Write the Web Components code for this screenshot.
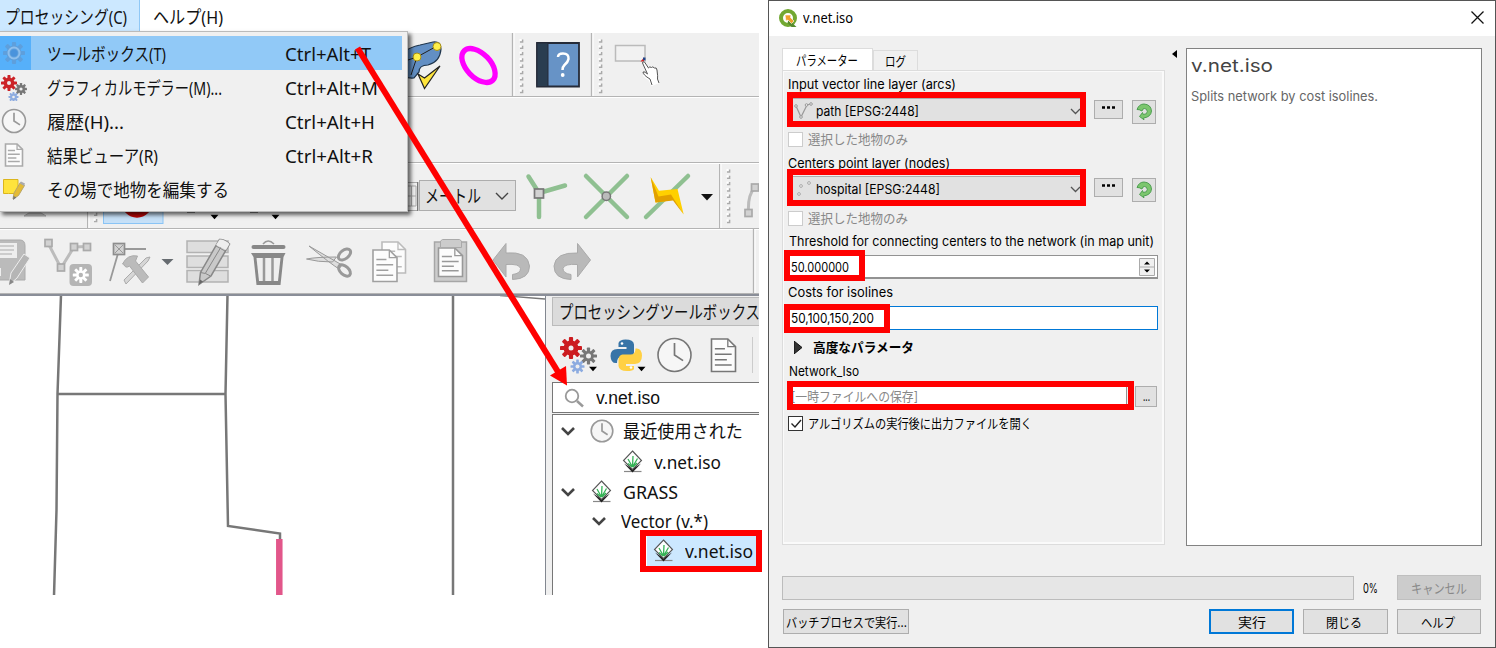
<!DOCTYPE html>
<html lang="ja"><head><meta charset="utf-8"><title>v.net.iso</title>
<style>html,body{margin:0;width:1496px;height:648px;overflow:hidden;background:#fff}</style></head>
<body><app-page></app-page>
<script>
const define=(n,html,after)=>customElements.define(n,class extends HTMLElement{
 connectedCallback(){ if(this.shadowRoot)return; const r=this.attachShadow({mode:'open'});
  const t=document.createElement('template'); t.innerHTML=typeof html==='function'?html(this):html; r.append(t.content.cloneNode(true)); if(after)after(this,r);}});

/* one line of text fitted to the width given in "w" */
define('fit-text','<style>:host{display:inline-block;white-space:nowrap;flex:none;line-height:20px;height:20px;text-align:left}span{display:inline-block;transform-origin:0 50%}</style><span><slot></slot></span>',(h,r)=>{
 const s=r.querySelector('span'),w=+h.getAttribute('w'); const m=s.getBoundingClientRect().width; h.style.width=w+'px'; if(m)s.style.transform=`scaleX(${w/m})`;});

const gear=(cx,cy,ro,ri,n,hole,fill)=>{let teeth='';for(let i=0;i<n;i++)teeth+=`<rect x="${cx-ro*.19}" y="${cy-ro}" width="${ro*.38}" height="${ro}" rx="${ro*.08}" transform="rotate(${i*360/n} ${cx} ${cy})"/>`;
 return `<g fill="${fill}">${teeth}<circle cx="${cx}" cy="${cy}" r="${ri}"/></g><circle cx="${cx}" cy="${cy}" r="${hole}" fill="#eee"/>`};
const grip=(x,y,n)=>{let s='';for(let i=0;i<n;i++)s+=`<path d="M${x} ${y+i*6.3+3}h2.6v-2.6" stroke="#aaa" stroke-width="1.5" fill="none"/><rect x="${x-.5}" y="${y+i*6.3}" width="2" height="2" fill="#fff"/>`;return s};
const sep=(x,y,h)=>`<path d="M${x+.5} ${y}v${h}" stroke="#b4b4b4" stroke-width="1.3"/><path d="M${x+2} ${y}v${h}" stroke="#fff"/>`;
const node=(x,y,s=7,c='#aaa')=>`<rect x="${x-s/2}" y="${y-s/2}" width="${s}" height="${s}" fill="#d2d2d2" stroke="${c}" stroke-width="1.7"/>`;
const clock=(x,y,r,c='#777',f='#f6f6f6')=>`<circle cx="${x}" cy="${y}" r="${r}" fill="${f}" stroke="${c}" stroke-width="1.6"/><path d="M${x} ${y-r*.72}V${y}l${r*.52} ${r*.34}" fill="none" stroke="${c}" stroke-width="1.7"/>`;
const doc=(x,y,w,h,c='#777')=>`<path d="M${x} ${y}h${w*.68}l${w*.32} ${w*.32}v${h-w*.32}h${-w}z" fill="#fcfcfc" stroke="${c}" stroke-width="1.6"/><path d="M${x+w*.68} ${y}v${w*.32}h${w*.32}" fill="none" stroke="${c}" stroke-width="1.3"/><path d="M${x+w*.14} ${y+h*.3}h${w*.42}M${x+w*.14} ${y+h*.47}h${w*.7}M${x+w*.14} ${y+h*.64}h${w*.5}M${x+w*.14} ${y+h*.8}h${w*.7}" stroke="${c}" stroke-width="1.5"/>`;
const grass='<path d="M2 21.500h17.500" stroke="#888" stroke-width="1.200"/><path d="M10.500 22.500L2 13.500 10.500 19 19 13.500z" fill="#222"/><path d="M10.500 1L19.500 10.500 10.500 19.500 1.500 10.500z" fill="#fff" stroke="#555" stroke-width="1.100"/><path d="M10.500 17L6 9M10.500 17L15.500 8.500M10.500 17L11 6M10 17L6 13.500M11 17L15 13" stroke="#35b356" stroke-width="1.300" fill="none"/>';
const tri=(x,y,c='#000')=>`<path d="M${x-4} ${y-2.200}h8l-4 4.500z" fill="${c}"/>`;
const pencil=(c='#888')=>`<path d="M199 284.500l1.500-12 19-33q5-.5 10 4.500l-18.500 32z" fill="#c9c9c9" stroke="${c}" stroke-width="1.500"/><path d="M200.500 272.500l5 1 5 2.500M224 242l-18.500 31M216 246l9 5" stroke="${c}" fill="none"/><path d="M199 284.500l1-5 3 2z" fill="#666"/><path d="M216 245l3.500-5.500q5-.5 10 4.500l-3.500 6z" fill="#eee"/>`;
const ICONS={
 gearmenu:gear(14,14,11,7.5,8,0,'#5e9fdc')+'<circle cx="14" cy="14" r="5.500" fill="none" stroke="#8fbfec" stroke-width="2"/><circle cx="14" cy="14" r="3.500" fill="#4a93dc"/>',
 gears:gear(9,10,8,5.400,8,2,'#cc2327')+gear(21,16,6,4,8,1.600,'#777')+gear(13.500,24,5,3.400,8,1.300,'#8eace0'),
 clockmenu:clock(14,14,11.5,'#999'), docmenu:doc(5.5,3,17,22,'#aaa'),
 edit:'<path d="M3.500 4.500h14.500v14h-9.500l-5 0z" fill="#ffe33c" stroke="#dbb51c"/><path d="M13 24l1-6 6-10 4.500 2.500-6 10z" fill="#e4bb35" stroke="#b9a66b"/><path d="M19.500 8l4.500 3 1-2.500-4-2z" fill="#aaa"/><path d="M13 25l.5-4 3 1.500z" fill="#777"/>',
 check:'<path d="M396 58Q408 47 420 45L433 42Q441 41 441 49 440 62 428 65 419 65 419 72L414 78Q405 79 396 72z" fill="#628fc4" stroke="#20364d" stroke-width="1.200"/><path d="M408 60L417 57 437 46M417 57L411 75" stroke="#222" fill="none"/><circle cx="437" cy="46.500" r="4" fill="#fff04a" stroke="#a78d17"/><circle cx="417" cy="57" r="4" fill="#fff04a" stroke="#a78d17"/><path d="M418 74l6.500 14.500L440 66l-15.500 12z" fill="#ffe53c" stroke="#222" stroke-width="1.200"/>',
 ring:'<ellipse cx="478.500" cy="65.500" rx="20.500" ry="12" transform="rotate(46 478.500 65.500)" fill="none" stroke="#f0f" stroke-width="5.300"/>',
 sg1:sep(512,33,64)+grip(520,39,9), sg2:sep(591,33,64)+grip(599,39,9),
 book:'<path d="M537 43h42v43.500h-42z" fill="#6793c6" stroke="#252b38" stroke-width="1.800"/><path d="M537 43h11v43.500h-11z" fill="#2a3d50" stroke="#252b38"/><path d="M558 57Q558 53.500 563 53.500 569 53.500 568.500 59 568 62 564.500 65 562.500 67 562.500 70" fill="none" stroke="#fff" stroke-width="2.500"/><circle cx="562.700" cy="75" r="1.900" fill="#fff"/>',
 select:'<rect x="615.500" y="45.500" width="29.500" height="15.500" fill="#f2f2f2" stroke="#bbb" stroke-width="1.500"/><path d="M640.500 61.500l3.500-4v4z" fill="#d22"/><path d="M643 60l0-2.500h2.500v3z" fill="#248"/><path d="M642.500 62Q644 60 646 64l3 4 3-1 3 1 2 3 1 8 1.500 4-8 3-3-6q-7-4-5.500-6l3 0z" fill="#fff"/><path d="M652 85l-2-6q-7-4-7-7 2-1 4.500 2L642.500 63q0-2 2-1l4 6q1-2 3-.5 1-1.500 3 .5 2-1 2.500 2 1 7 .5 9l1.500 4" fill="none" stroke="#555" stroke-width="1"/>',
 tent:'<path d="M24 216l5-3h12l5 3z" fill="#c5c5c5" stroke="#aaa"/>', sg3:sep(87,163,65)+grip(94,206,3),
 rec:'<rect x="103.500" y="170" width="59.500" height="53.500" fill="#c6e0f7" stroke="#8ac4f5"/><circle cx="137" cy="202" r="15.700" fill="#bd0505"/>',
 menus:'<path d="M187 212h8M250 212h8" stroke="#888" stroke-width="2"/>'+tri(214.500,217)+tri(275.500,217),
 spin:'<path d="M400 182.500h17.500v28H400M411.500 186v20M408 196h8M408 206h8V186h-8" fill="#f0f0f0" stroke="#aaa"/><path d="M417.700 182v29" stroke="#777" stroke-width="1.300"/>',
 v1:'<path d="M528.500 176.500L539 193 565 185.500M539 193v24" fill="none" stroke="#8fc091" stroke-width="4.500" stroke-linecap="round"/>'+node(539,193.500,9,'#777'),
 v2:'<path d="M586 176l41 41M627 176l-41 41" stroke="#8fc091" stroke-width="4.500" stroke-linecap="round"/><circle cx="606.300" cy="196.300" r="4.200" fill="#bbb" stroke="#777" stroke-width="1.500"/>',
 v3:'<path d="M688 176l-42 41" stroke="#8fc091" stroke-width="4.500" stroke-linecap="round"/><path d="M650.700 177.300L659 190.700 677.500 189 683.700 214.500 673.500 199.500 664 201.500 655.500 202.500z" fill="#ffd000"/><path d="M650.700 177.300L658.500 196.500 671 194.500 683.700 214.500 673 200.500 655.500 202.500z" fill="#e2a000"/>',
 vt:'<path d="M701 194h12l-6 6.500z" fill="#111"/>', sg4:sep(719,164,64)+grip(727,169,9),
 part:'<path d="M748.500 213q-1-18 6-25h6" fill="none" stroke="#bbb" stroke-width="3"/>'+node(748.500,213)+node(755,187.500),
 save:'<path d="M-12 240h32q5 0 5 6v34H-12z" fill="#bbb" stroke="#aaa"/><path d="M-4 243h21v15H-4zM-4 268h5v8h-5z" fill="#eee"/><path d="M0 246h14M0 250h14M0 254h12" stroke="#aaa"/><path d="M9 285l2-12 13-19 6 4-13 20z" fill="#b5b5b5" stroke="#eee"/><path d="M9 285l1-6 4 3z" fill="#888"/>',
 verts:'<path d="M48 243l13 25 13-21 13-.5" fill="none" stroke="#bcbcbc" stroke-width="3"/>'+node(48.500,243)+node(74,247)+node(87,247)+node(61,267.500)+'<rect x="69.500" y="264" width="22.500" height="22" rx="4" fill="#b5b5b5"/>'+gear(80.800,275,8,4.600,8,2.200,'#fff').replace('#eee','#b5b5b5'),
 tools:'<path d="M119 250l-9 31M119 249h27" stroke="#999" stroke-width="1.800"/>'+node(119,249,11,'#8d8d8d')+'<path d="M115 245l8 8M123 245l-8 8" stroke="#999"/><path d="M124 280l22-22 4-1-2 4-22 23z" fill="#d6d6d6" stroke="#aaa"/><path d="M122.500 264q5-10 15-8l-2 5 13 16-6 6-13-17q-4 3-6-2z" fill="#bbb" stroke="#aaa"/>'+'<path d="M161.500 259h12l-6 6z" fill="#666b70"/>',
 table:'<g fill="#dedede" stroke="#b2b2b2" stroke-width="1.500"><path d="M187 241h41v11.500h-41zM187 256h41v11.500h-41zM187 270.500h41v11.500h-41z"/></g>'+pencil(),
 trash:'<path d="M253.500 247h30" stroke="#888" stroke-width="4" stroke-linecap="round"/><path d="M263 244q5-6 11 0" fill="none" stroke="#999" stroke-width="1.500"/><path d="M251 253h34.500l-2 4-3 28h-24l-3-28z" fill="#888"/><path d="M256.500 258h24l-2.500 23h-19z" fill="#eee"/><path d="M264 258v23M272.500 258v23" stroke="#999" stroke-width="2.500"/>',
 scissors:'<path d="M309 246l33 19-3 4q-8-5-30-23zM306.500 259q10-2 30-2l-4 5q-15 0-26-3z" fill="#ddd" stroke="#999"/><ellipse cx="344.500" cy="254.500" rx="7" ry="4.200" transform="rotate(-38 344.500 254.500)" fill="none" stroke="#999" stroke-width="3"/><ellipse cx="344.500" cy="270.500" rx="7" ry="4.200" transform="rotate(42 344.500 270.500)" fill="none" stroke="#999" stroke-width="3"/>',
 copy:doc(382,242,23.500,31,'#bbb')+doc(373,250,24,31.500,'#a0a0a0'),
 paste:'<path d="M434.500 242h32v39.500h-32z" fill="#ccc" stroke="#a6a6a6" stroke-width="1.500"/>'+doc(438.500,248,24,28.500,'#999')+'<path d="M440.500 241l2-1.500h17l2 1.500v6.500h-21z" fill="#ccc" stroke="#aaa"/>',
 undo:'<path d="M493 260l13-16.500v9.500q22-2 23.500 13 0 13-17 13.500v-5q8-1 8-6-1-5-14.500-4v12.500z" fill="#b9b9b9" stroke="#aaa"/>',
 redo:'<path d="M590.500 260l-13-16.500v9.500q-22-1-23.500 13 0 13 17 13.500v-5q-8-1-8-6 1-5 14.500-4v12.500z" fill="#b9b9b9" stroke="#aaa"/>',
 end4:sep(753,229,64),
 pgears:gear(571,348,11,7.500,8,2.500,'#cc1c20')+gear(588.500,356,8.500,5.300,8,2.500,'#777')+gear(577.500,366.500,7,4.500,8,2,'#8cabe0')+tri(593,369),
 python:'<path d="M625.500 339.500q8 0 8.500 5v8q-.5 4-4 4.500h-9q-4 0-4 6-6 1-6.500-7 0-7 7-7h9v-2h-8v-4q1-3.500 7-3.500z" fill="#3774a7"/><path d="M627 371q-8 0-8.500-5v-7q.5-4 4-4.500h8q5 0 5-6 6-1 6.500 7 0 8-7 8.500h-9v2h8v3q-1 2-7 2z" fill="#ffd043"/><circle cx="622" cy="343.500" r="1.300" fill="#fff"/><circle cx="631" cy="367.500" r="1.300" fill="#fff"/>'+tri(641.500,369),
 pclock:clock(674.500,355,16.500), pdoc:doc(711.500,339,24,32.500), pend:'<path d="M752.500 337v36" stroke="#ccc"/>',
 search:'<circle cx="573" cy="395" r="6.300" fill="#fff" stroke="#999" stroke-width="1.800"/><path d="M578 400l6 5.500" stroke="#999" stroke-width="2.500"/>',
 chev:'<path d="M2 4l6 6 6-6" fill="none" stroke="#444" stroke-width="2.600"/>', clock:clock(12,12,10.8,'#999'), grass:grass,
 logo:'<circle cx="9" cy="9" r="7" fill="none" stroke="#72a832" stroke-width="4"/><path d="M9.500 10.500l8 7.500h-5l-4-4z" fill="#568b2e"/><path d="M6 6h6l-.5 2.500L15 12l-2.500 2.500L9 11l-2 1z" fill="#f0a02e" stroke="#fff" stroke-width=".6"/>',
 close:'<path d="M.5.500l12 12M12.500.500l-12 12" stroke="#111" stroke-width="1.300"/>',
 down:'<path d="M1 2l4.500 4.500L10 2" fill="none" stroke="#555" stroke-width="1.300"/>', downbig:'<path d="M2 2l6 6 6-6" fill="none" stroke="#444" stroke-width="1.400"/>',
 line:'<path d="M2 4l5 11 6-12 4-1" fill="none" stroke="#999" stroke-width="1.200"/><g fill="#eee" stroke="#999"><circle cx="2" cy="4" r="1.300"/><circle cx="7" cy="15" r="1.300"/><circle cx="12.500" cy="3" r="1.300"/><circle cx="17" cy="2" r="1.300"/></g>',
 points:'<g fill="#eee" stroke="#aaa"><circle cx="7" cy="6" r="1.400"/><circle cx="15" cy="3" r="1.400"/><circle cx="5" cy="14" r="1.400"/></g>',
 refresh:'<path d="M2 7.500Q4 2 9 2q7 .5 7.500 7-.5 6-8 7l.5 1.800L4.500 14.500l3-4 .8 2q4 0 4-3Q12 6.500 9.500 6.500 7.500 6.500 7 9q-3-1.800-5-1.500z" fill="#7cc66e" stroke="#449a48" stroke-width=".9"/>',
 dots:'<path d="M0 1.500h3M5 1.500h3M10 1.500h3" stroke="#000" stroke-width="2.400"/>',
 arrow:'<path d="M0 0l8 6.500-8 6.500z" fill="#333" stroke="#111"/>', left:'<path d="M5 0v8L0 4z" fill="#000"/>',
 tick:'<path d="M2.500 6.500l3.500 3.500 6-7" fill="none" stroke="#222" stroke-width="1.400"/>',
 updown:'<path d="M.5.500h15v17H.5zM.5 9h15" fill="#f0f0f0" stroke="#aaa"/><path d="M5 6.500h6l-3-3zM5 11.500h6l-3 3z" fill="#000"/>'
};
/* icon clipped to its "box": x y width height in the drawing's own units */
define('q-icon',h=>{const b=h.getAttribute('box').split(' ');return `<style>:host{display:block;flex:none;width:${b[2]}px;height:${b[3]}px}svg{display:block}</style><svg width="${b[2]}" height="${b[3]}" viewBox="${b.join(' ')}">${ICONS[h.getAttribute('name')]}</svg>`});

define('menu-item',h=>`<style>:host{display:grid;grid-template-columns:31px 254px auto;align-items:center;height:34px;width:402px;box-sizing:border-box}:host([on]){background:#91c9f7}.i{align-self:stretch;display:flex;align-items:center}:host([on]) .i{background:#56b0fa}.t{padding-left:16px}.t,::slotted([slot=key]){padding-top:2px}</style><div class="i"><q-icon name="${h.getAttribute('icon')}" box="0 0 28 28"></q-icon></div><div class="t"><slot></slot></div><slot name="key"></slot>`);
define('tool-bar','<style>:host{display:flex;box-sizing:border-box;background:#f0f0f0;border-bottom:1px solid #b4b4b4;overflow:hidden;box-shadow:inset 0 1px #fff}</style><slot></slot>');
define('unit-combo','<style>:host{display:flex;flex:none;box-sizing:border-box;width:97px;height:31px;margin-top:17px;border:1px solid #adadad;background:#e1e1e1;align-items:center;padding:0 5px;justify-content:space-between}</style><slot></slot><q-icon name="downbig" box="0 0 16 10"></q-icon>');
define('tree-row','<style>:host{display:flex;align-items:center;box-sizing:border-box}</style><slot></slot>');

define('map-canvas',`<style>:host{display:block;width:545px;height:299px;background:#fff}svg{display:block}</style><svg width="545" height="299" viewBox="0 296 545 299"><g fill="none" stroke="#777" stroke-width="2.500"><path d="M61 295L57.500 394 56.500 510 54 596M57 394H226M227.500 295L225.500 394 228 526 280 533.500V541M453 295V596"/><path d="M500 295.500L545 299" stroke-width="1.500"/></g><path d="M279.300 539V595" stroke="#e2568a" stroke-width="6.500"/></svg>`);

define('toolbox-panel',`<style>:host{display:block;width:207px;height:299px;background:#f0f0f0;overflow:hidden}
.title{box-sizing:border-box;margin-top:1px;height:29px;border:1px solid #bbb;border-right:0;background:#dbdbdb;display:flex;align-items:center;padding-left:6px}
.tools{display:flex;height:56px}.search{box-sizing:border-box;height:31px;border:1px solid #777;border-right:0;background:#fff;display:flex;align-items:center;gap:10px;padding-left:10px}
.tree{box-sizing:border-box;height:183px;border-left:1px solid #777;border-top:1px solid #777;margin-top:1px;background:#fff;display:grid;grid-template-rows:31px 31px 30px 27px 33px}.sel{margin-left:94px;background:#cce8ff;padding-left:6px}</style>
<div class="title"><fit-text w="201">プロセッシングツールボックス</fit-text></div>
<div class="tools"><q-icon name="pgears" box="552 326 50 56"></q-icon><q-icon name="python" box="602 326 50 56"></q-icon><q-icon name="pclock" box="652 326 46 56"></q-icon><q-icon name="pdoc" box="698 326 46 56"></q-icon><q-icon name="pend" box="744 326 15 56"></q-icon></div>
<div class="search"><q-icon name="search" box="564 386 22 22"></q-icon><fit-text w="64" style="font-family:'Liberation Sans';font-size:18px;margin-left:1px">v.net.iso</fit-text></div>
<div class="tree"><tree-row style="padding-left:7px"><q-icon name="chev" box="0 0 16 14"></q-icon><q-icon name="clock" box="0 0 24 24" style="margin:0 9px 0 14px"></q-icon><fit-text w="120">最近使用された</fit-text></tree-row>
<tree-row style="padding-left:69px"><q-icon name="grass" box="0 0 22 24" style="margin-right:10px"></q-icon><fit-text w="67">v.net.iso</fit-text></tree-row>
<tree-row style="padding-left:7px"><q-icon name="chev" box="0 0 16 14"></q-icon><q-icon name="grass" box="0 0 22 24" style="margin:0 10px 0 15px"></q-icon><fit-text w="55">GRASS</fit-text></tree-row>
<tree-row style="padding-left:38px"><q-icon name="chev" box="0 0 16 14"></q-icon><fit-text w="87" style="margin-left:14px">Vector (v.*)</fit-text></tree-row>
<tree-row class="sel"><q-icon name="grass" box="0 0 22 24" style="margin-right:10px"></q-icon><fit-text w="68">v.net.iso</fit-text></tree-row></div>`);

define('qgis-window',`<style>:host{display:block;position:relative;width:759px;height:595px;overflow:hidden;background:#f0f0f0;font:18px/20px "Noto Sans","Noto Sans CJK JP",sans-serif;color:#111}
.bar{display:flex;height:32px;background:#fff;align-items:center}.on{box-sizing:border-box;width:140px;height:32px;background:#cce8ff;border:1px solid #90c8f6;border-left:0;border-top:0;padding:7px 0 0 5px;margin-right:13px}
.menu{position:absolute;left:-1px;top:31px;width:409px;height:181px;box-sizing:border-box;border:1px solid #bbb;background:#f0f0f0;padding-top:4px;box-shadow:3px 3px 4px #0009}
.body{display:flex;border-top:2px solid #8a8e98;height:299px}.b{width:7px;border-left:1px solid #828790;box-sizing:border-box}</style>
<div class="bar"><div class="on"><fit-text w="122">プロセッシング(C)</fit-text></div><fit-text w="70" style="margin-top:1px">ヘルプ(H)</fit-text></div>
<tool-bar style="height:65px;padding-left:400px"><q-icon name="check" box="400 32 50 65"></q-icon><q-icon name="ring" box="450 32 61 65"></q-icon><q-icon name="sg1" box="511 32 17 65"></q-icon><q-icon name="book" box="528 32 62 65"></q-icon><q-icon name="sg2" box="590 32 17 65"></q-icon><q-icon name="select" box="607 32 63 65"></q-icon></tool-bar>
<tool-bar style="height:66px"></tool-bar>
<tool-bar style="height:66px;padding-left:20px"><q-icon name="tent" box="20 163 67 65"></q-icon><q-icon name="sg3" box="87 163 16 65"></q-icon><q-icon name="rec" box="103 163 61 65"></q-icon><q-icon name="menus" box="164 163 244 65"></q-icon><q-icon name="spin" box="408 163 11 65"></q-icon><unit-combo><fit-text w="56" style="font-size:18px">メートル</fit-text></unit-combo><q-icon name="v1" box="516 163 61 65"></q-icon><q-icon name="v2" box="577 163 60 65"></q-icon><q-icon name="v3" box="637 163 58 65"></q-icon><q-icon name="vt" box="695 163 24 65"></q-icon><q-icon name="sg4" box="719 163 17 65"></q-icon><q-icon name="part" box="736 163 23 65"></q-icon></tool-bar>
<tool-bar style="height:65px"><q-icon name="save" box="0 229 40 64"></q-icon><q-icon name="verts" box="40 229 60 64"></q-icon><q-icon name="tools" box="100 229 80 64"></q-icon><q-icon name="table" box="180 229 58 64"></q-icon><q-icon name="trash" box="238 229 60 64"></q-icon><q-icon name="scissors" box="298 229 62 64"></q-icon><q-icon name="copy" box="360 229 60 64"></q-icon><q-icon name="paste" box="420 229 60 64"></q-icon><q-icon name="undo" box="480 229 60 64"></q-icon><q-icon name="redo" box="540 229 60 64"></q-icon><q-icon name="end4" box="600 229 159 64"></q-icon></tool-bar>
<div class="body"><map-canvas></map-canvas><div class="b"></div><toolbox-panel></toolbox-panel></div>
<div class="menu"><menu-item on icon="gearmenu"><fit-text w="119">ツールボックス(T)</fit-text><fit-text slot="key" w="86">Ctrl+Alt+T</fit-text></menu-item><menu-item icon="gears"><fit-text w="175">グラフィカルモデラー(M)...</fit-text><fit-text slot="key" w="93">Ctrl+Alt+M</fit-text></menu-item><menu-item icon="clockmenu"><fit-text w="77">履歴(H)...</fit-text><fit-text slot="key" w="90">Ctrl+Alt+H</fit-text></menu-item><menu-item icon="docmenu"><fit-text w="111">結果ビューア(R)</fit-text><fit-text slot="key" w="88">Ctrl+Alt+R</fit-text></menu-item><menu-item icon="edit"><fit-text w="182">その場で地物を編集する</fit-text></menu-item></div>`);

define('push-button','<style>:host{display:flex;align-items:center;justify-content:center;box-sizing:border-box;flex:none;border:1px solid #adadad;background:#e1e1e1;height:25px;width:84px}:host([primary]){border:2px solid #0078d7}:host([disabled]){background:#ccc;border-color:#bfbfbf;color:#888}</style><slot></slot>');
define('check-box',h=>`<style>:host{display:flex;align-items:center;padding-left:1px;gap:5px;color:#888}:host([checked]){color:#000}i{box-sizing:border-box;width:15px;height:15px;background:#fff;border:1px solid #ccc}:host([checked]) i{border-color:#333}</style><i>${h.hasAttribute('checked')?'<q-icon name="tick" box="0 0 13 13"></q-icon>':''}</i><slot></slot>`);
define('layer-row',h=>`<style>:host{display:flex;align-items:center}.c{display:flex;align-items:center;box-sizing:border-box;width:299px;height:27px;border:1px solid #adadad;background:#e1e1e1;padding:0 4px 0 6px;gap:3px}.c q-icon:last-child{margin-left:auto}</style><div class="c"><q-icon name="${h.getAttribute('icon')}" box="0 0 19 18"></q-icon><slot></slot><q-icon name="down" box="0 0 11 8"></q-icon></div><push-button style="width:29px;height:19px;margin:-4px 9px 0 8px"><q-icon name="dots" box="0 0 13 3" style="margin-top:-4px"></q-icon></push-button><push-button style="width:24px;height:24px;margin-top:1px"><q-icon name="refresh" box="0 0 18 19"></q-icon></push-button>`);

define('param-form',`<style>:host{box-sizing:border-box;display:grid;width:383px;height:475px;border:1px solid #dcdcdc;box-shadow:inset -2px -2px #fafafa,inset 1px 1px #fafafa;padding-left:5px;grid-template-rows:26px 28px 28px 20px 32px 26px 20px 32px 18px 34px 24px 24px 26px 28px;align-items:center}.e{display:flex;align-items:center;box-sizing:border-box;width:371px;height:24px;border:2px solid #929292;border-width:1px 1px 2px;background:#fff;padding:0 2px 0 3px;justify-content:space-between}.f{border:1px solid #0078d7}.s{display:flex;gap:8px;align-items:center}layer-row,check-box,.e,.s{position:relative;margin-left:-1px}.s .e{margin-left:0}</style>
<fit-text w="168">Input vector line layer (arcs)</fit-text>
<layer-row icon="line"><fit-text w="103">path [EPSG:2448]</fit-text></layer-row>
<check-box><fit-text w="100">選択した地物のみ</fit-text></check-box>
<fit-text w="162">Centers point layer (nodes)</fit-text>
<layer-row icon="points"><fit-text w="124">hospital [EPSG:2448]</fit-text></layer-row>
<check-box><fit-text w="100">選択した地物のみ</fit-text></check-box>
<fit-text w="365" style="margin-left:1px">Threshold for connecting centers to the network (in map unit)</fit-text>
<div class="e"><fit-text w="58">50.000000</fit-text><q-icon name="updown" box="0 0 16 18"></q-icon></div>
<fit-text w="105">Costs for isolines</fit-text>
<div class="e f"><fit-text w="83">50,100,150,200</fit-text></div>
<div class="s" style="padding-left:7px;gap:10px;font-weight:700"><q-icon name="arrow" box="0 0 9 13"></q-icon><fit-text w="101">高度なパラメータ</fit-text></div>
<fit-text w="70" style="margin-left:1px">Network_Iso</fit-text>
<div class="s"><div class="e" style="width:340px;color:#888"><fit-text w="127">[一時ファイルへの保存]</fit-text></div><push-button style="width:22px;height:21px"><fit-text w="7">...</fit-text></push-button></div>
<check-box checked><fit-text w="224">アルゴリズムの実行後に出力ファイルを開く</fit-text></check-box>`);

define('algorithm-dialog',`<style>:host{box-sizing:border-box;display:flex;flex-direction:column;width:728px;height:648px;border:1px solid #555;background:#f0f0f0;font:13px/20px Inter,"Noto Sans CJK JP",sans-serif;color:#000}
.t{height:35px;background:#fff;display:flex;align-items:center;padding:0 11px 0 10px;font:14px "Noto Sans",sans-serif}.t>:last-child{margin-left:auto}.t q-icon{margin-top:-2px}.t fit-text{margin-top:-2px}
.main{display:flex;height:498px;padding:12px 0 0 13px}.tabs{display:flex;height:22px;align-items:flex-end}.tab{box-sizing:border-box;display:flex;align-items:center;justify-content:center;width:45px;height:20px;border:1px solid #dcdcdc;border-bottom:0}.a{width:91px;height:22px;background:#fff;padding-right:2px}
.h{box-sizing:border-box;width:296px;height:498px;border:1px solid #828282;background:#fff;padding:7px 4px;color:#666}
.p{display:flex;align-items:center;height:25px;margin:29px 0 0 13px}.g{box-sizing:border-box;width:572px;height:24px;border:1px solid #bcbcbc;background:#e6e6e6}
.f{display:flex;margin:9px 0 0 14px;gap:9px}</style>
<div class="t"><q-icon name="logo" box="0 0 18 18"></q-icon><fit-text w="50" style="margin-left:6px">v.net.iso</fit-text><q-icon name="close" box="0 0 13 13"></q-icon></div>
<div class="main"><div><div class="tabs"><div class="tab a"><fit-text w="62">パラメーター</fit-text></div><div class="tab"><fit-text w="21">ログ</fit-text></div></div><param-form></param-form></div><q-icon name="left" box="0 0 6 9" style="margin:2px 8px 0 7px"></q-icon><div class="h"><fit-text w="82" style="font-size:18px;color:#444">v.net.iso</fit-text><div style="margin-top:9px"><fit-text w="187">Splits network by cost isolines.</fit-text></div></div></div>
<div class="p"><div class="g"></div><fit-text w="15" style="margin:0 19px 0 9px">0%</fit-text><push-button disabled><fit-text w="56">キャンセル</fit-text></push-button></div>
<div class="f"><push-button style="width:126px;margin-right:auto"><fit-text w="121">バッチプロセスで実行...</fit-text></push-button><push-button primary style="width:85px"><fit-text w="28">実行</fit-text></push-button><push-button style="width:85px"><fit-text w="36" style="margin-right:3px">閉じる</fit-text></push-button><push-button style="margin-right:14px"><fit-text w="34" style="margin-right:2px">ヘルプ</fit-text></push-button></div>`);

define('app-page',`<style>:host{display:flex;gap:9px;position:relative;width:1496px;height:648px;background:#fff}.o{position:absolute;left:0;top:0}</style><qgis-window></qgis-window><algorithm-dialog></algorithm-dialog>
<svg class="o" width="1496" height="648"><path d="M357.500 48L560 375" stroke="#f00" stroke-width="6"/><path d="M567 385.500L550 375.500 566 366z" fill="#f00"/><g fill="none" stroke="#f00" stroke-width="6"><rect x="790" y="95" width="293" height="29"/><rect x="790" y="172" width="293" height="31"/><rect x="787" y="253" width="75" height="25"/><rect x="787" y="307" width="100" height="23"/><rect x="790" y="384" width="341" height="23"/><rect x="643" y="533" width="116" height="36"/></g></svg>`);
</script></body></html>
